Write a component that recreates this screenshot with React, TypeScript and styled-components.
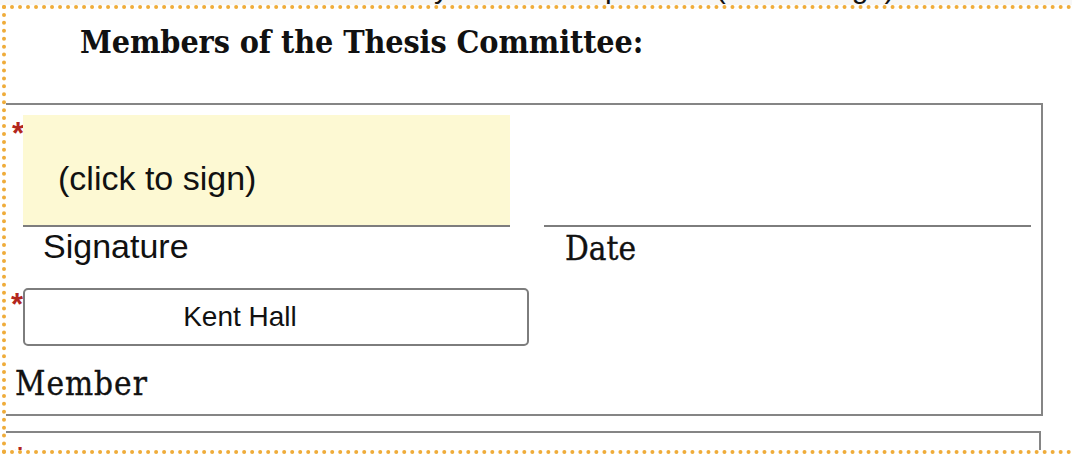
import React from "react";
import styled, { createGlobalStyle } from "styled-components";

const Global = createGlobalStyle`
  html, body { margin: 0; padding: 0; background: #ffffff; }
  body { font-family: "Liberation Sans", Arial, sans-serif; color: #111; }
`;

const Page = styled.div`
  width: 1072px;
  height: 454px;
  overflow: hidden;
  background: #ffffff;
`;

const PrevLine = styled.div`
  height: 5px;
  background: #f7f7f7;
  overflow: hidden;
  display: flex;
  align-items: flex-end;
  font-family: "Liberation Sans", Arial, sans-serif;
  font-size: 30px;
  line-height: 1;
  color: #111;
`;

const PrevGlyph = styled.span<{ $left: number }>`
  margin-left: ${(p) => p.$left}px;
  transform: translateY(-2px);
`;

const Frame = styled.div`
  margin-left: 2px;
  border-top: 4px dotted #efac3a;
  border-left: 4px dotted #efac3a;
  border-bottom: 4px dotted #efac3a;
  height: 441px;
  overflow: hidden;
  display: flex;
  flex-direction: column;
`;

const Heading = styled.h2`
  margin: 0;
  padding: 15px 0 0 74px;
  height: 94px;
  flex: 0 0 94px;
  box-sizing: border-box;
  font-family: "DejaVu Serif", "Liberation Serif", serif;
  font-stretch: condensed;
  font-weight: 700;
  font-size: 32px;
  letter-spacing: -0.1px;
  line-height: 36px;
  color: #111;
`;

const Card = styled.div<{ $width: number; $height: number }>`
  width: ${(p) => p.$width}px;
  height: ${(p) => p.$height}px;
  flex: 0 0 ${(p) => p.$height}px;
  border: 2px solid #858585;
  border-left: none;
  box-sizing: border-box;
  padding: 10px 0 0 0;
`;

const Grid = styled.div`
  display: grid;
  grid-template-columns: 525px 487px;
  column-gap: 13px;
  align-items: start;
`;

const FieldRow = styled.div`
  display: flex;
  align-items: flex-start;
`;

const Star = styled.span<{ $top: number; $left: number }>`
  width: 17px;
  flex: 0 0 17px;
  display: block;
  padding-left: ${(p) => p.$left}px;
  box-sizing: border-box;
  margin-top: ${(p) => p.$top}px;
  color: #b3261e;
  font-family: "Liberation Sans", Arial, sans-serif;
  font-size: 31px;
  line-height: 16px;
  font-weight: 700;
`;

const SignBox = styled.div`
  width: 487px;
  height: 112px;
  flex: 0 0 487px;
  box-sizing: border-box;
  background: #fdf9d3;
  border-bottom: 2px solid #7d7d7d;
  padding: 44px 0 0 35px;
  font-size: 34px;
  line-height: 39px;
  color: #111;
  cursor: pointer;
`;

const DateLine = styled.div`
  width: 487px;
  height: 112px;
  box-sizing: border-box;
  border-bottom: 2px solid #7d7d7d;
`;

const SansLabel = styled.div`
  padding-left: 37px;
  font-size: 34px;
  line-height: 39px;
  color: #111;
`;

const SlabLabel = styled.div<{ $pl: number; $mt: number; $ls: number }>`
  padding-left: ${(p) => p.$pl}px;
  margin-top: ${(p) => p.$mt}px;
  font-family: "DejaVu Serif", "Liberation Serif", serif;
  font-stretch: condensed;
  font-size: 33px;
  letter-spacing: ${(p) => p.$ls}px;
  line-height: 38px;
  color: #111;
  -webkit-text-stroke: 0.35px #111;
`;

const NameBox = styled.div`
  width: 506px;
  height: 58px;
  flex: 0 0 506px;
  box-sizing: border-box;
  border: 2px solid #7d7d7d;
  border-radius: 5px;
  display: flex;
  align-items: center;
  justify-content: center;
  padding-right: 72px;
  font-size: 28px;
  color: #111;
`;

const Spacer = styled.div<{ $h: number }>`
  height: ${(p) => p.$h}px;
  flex: 0 0 ${(p) => p.$h}px;
`;

export default function App() {
  return (
    <Page>
      <Global />
      <PrevLine>
        <PrevGlyph $left={434}>y</PrevGlyph>
        <PrevGlyph $left={156}>p</PrevGlyph>
        <PrevGlyph $left={94}>(</PrevGlyph>
        <PrevGlyph $left={126}>g</PrevGlyph>
        <PrevGlyph $left={16}>)</PrevGlyph>
      </PrevLine>
      <Frame>
        <Heading>Members of the Thesis Committee:</Heading>
        <Card $width={1037} $height={313}>
          <Grid>
            <div>
              <FieldRow>
                <Star $top={11} $left={6}>*</Star>
                <SignBox>(click to sign)</SignBox>
              </FieldRow>
              <SansLabel>Signature</SansLabel>
              <Spacer $h={22} />
              <FieldRow>
                <Star $top={9} $left={5}>*</Star>
                <NameBox>Kent Hall</NameBox>
              </FieldRow>
              <SlabLabel $pl={9} $mt={19} $ls={1}>Member</SlabLabel>
            </div>
            <div>
              <DateLine />
              <SlabLabel $pl={21} $mt={3} $ls={0}>Date</SlabLabel>
            </div>
          </Grid>
        </Card>
        <Spacer $h={15} />
        <Card $width={1035} $height={60}>
          <FieldRow>
            <Star $top={8} $left={8}>*</Star>
          </FieldRow>
        </Card>
      </Frame>
    </Page>
  );
}
